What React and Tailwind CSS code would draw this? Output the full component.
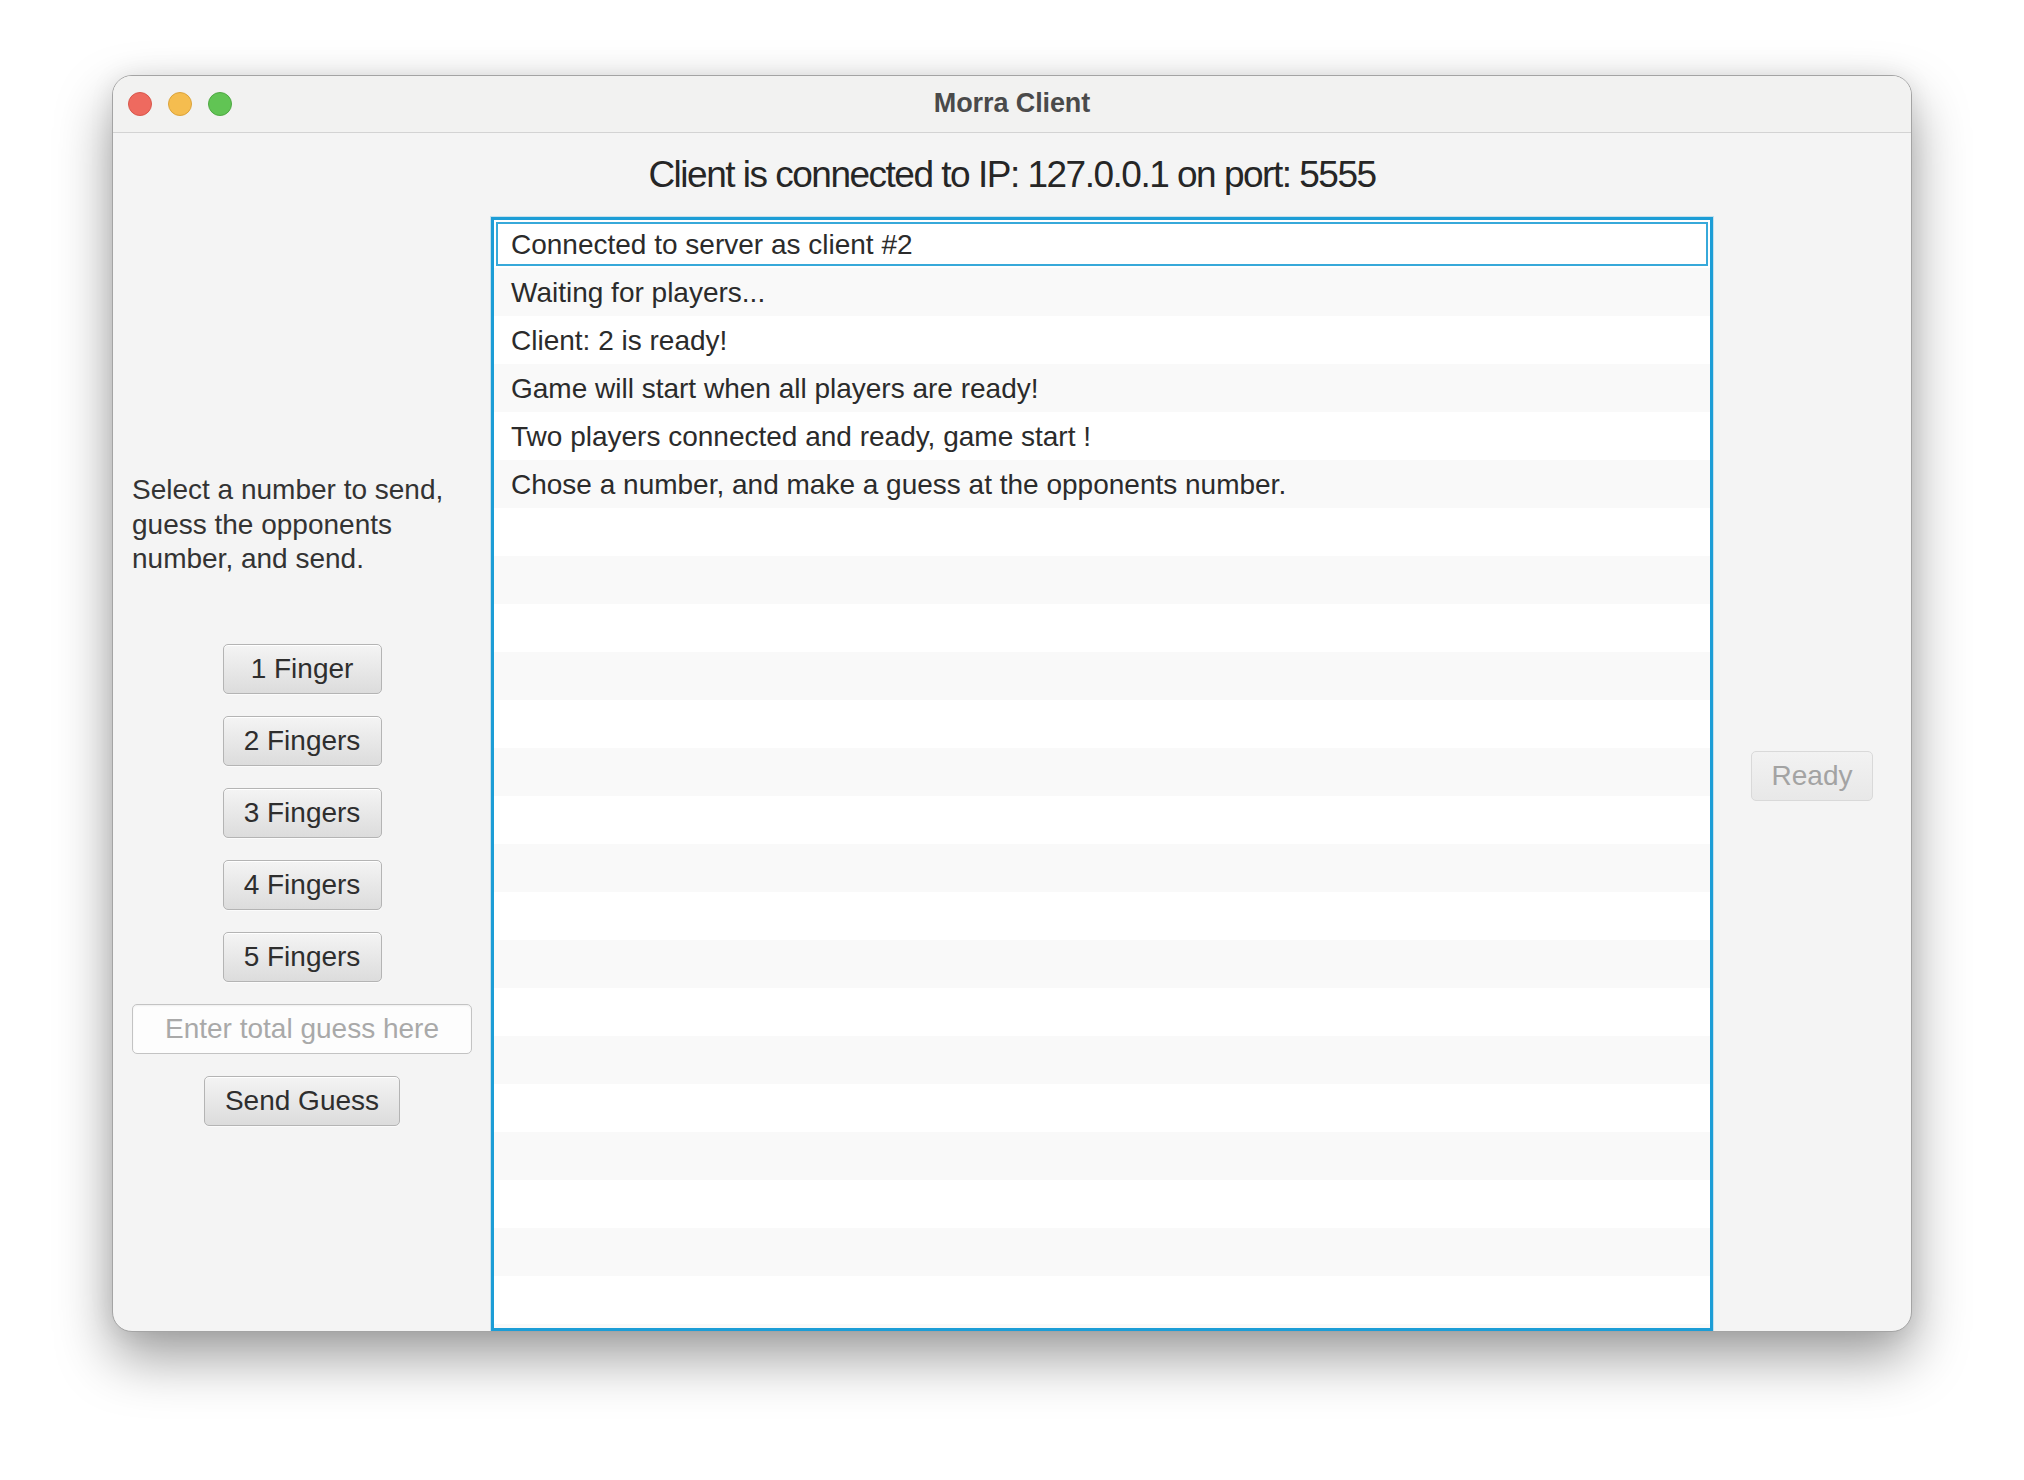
import React from 'react'

const messages = [
    'Connected to server as client #2',
    'Waiting for players...',
    'Client: 2 is ready!',
    'Game will start when all players are ready!',
    'Two players connected and ready, game start !',
    'Chose a number, and make a guess at the opponents number.',
]

const fingerOptions = ['1 Finger', '2 Fingers', '3 Fingers', '4 Fingers', '5 Fingers']

const FxButton = ({ children, className = '', disabled = false }) => (
    <button
        type="button"
        disabled={disabled}
        className={
            disabled
                ? `h-[50px] rounded-[5px] border-[1.5px] border-[#d9d9d9] bg-gradient-to-b from-[#f2f2f2] to-[#e8e8e8] text-[28px] text-[#a3a3a3] ${className}`
                : `h-[50px] rounded-[5px] border-[1.5px] border-[#b4b4b4] bg-gradient-to-b from-[#f4f4f4] to-[#dcdcdc] text-[28px] text-[#2e2e2e] shadow-[inset_0_1px_0_#ffffff,0_1px_0_#fbfbfb] ${className}`
        }
    >
        {children}
    </button>
)

const TrafficLights = () => (
    <div className="flex items-center gap-4 pl-[15px]">
        <span className="w-6 h-6 rounded-full bg-[#ee6a5f] border border-[#d8574c]" />
        <span className="w-6 h-6 rounded-full bg-[#f5bd4f] border border-[#dba33b]" />
        <span className="w-6 h-6 rounded-full bg-[#61c454] border border-[#4fa843]" />
    </div>
)

const MessageList = () => {
    const rows = Array.from({ length: 24 }, (_, i) => messages[i] || '')

    return (
        <div className="w-[1222px] h-full border-[3px] border-[#1c9dd6] bg-white overflow-hidden shadow-[0_0_0_1px_rgba(28,157,214,0.22)]">
            {rows.map((text, i) => (
                <div
                    key={i}
                    className={`h-[48px] shrink-0 ${i % 2 === 1 ? 'bg-[#f9f9f9]' : 'bg-white'}`}
                >
                    {i === 0 ? (
                        <div className="h-full p-[2px]">
                            <div className="h-full border-2 border-[#37a9da] flex items-center pl-[13px] pt-[2px] text-[28px] text-[#2b2b2b] whitespace-nowrap">
                                {text}
                            </div>
                        </div>
                    ) : (
                        <div className="h-full flex items-center pl-[17px] pt-[2px] text-[28px] text-[#2b2b2b] whitespace-nowrap">
                            {text}
                        </div>
                    )}
                </div>
            ))}
        </div>
    )
}

export default function App() {
    return (
        <div className="w-[2024px] h-[1480px] bg-white pl-[112px] pt-[75px] font-['Liberation_Sans',Arial,sans-serif]">
            <div className="w-[1800px] h-[1257px] flex flex-col rounded-[20px] border border-[#a4a4a4] bg-[#f4f4f4] overflow-hidden shadow-[0_26px_55px_rgba(0,0,0,0.38),0_0_24px_rgba(0,0,0,0.08)]">

                {/* title bar */}
                <div className="h-[57px] shrink-0 grid grid-cols-[1fr_auto_1fr] items-center bg-[#f2f2f1] border-b border-[#d3d3d3]">
                    <TrafficLights />
                    <div className="text-[27px] font-bold text-[#4a4a4a] tracking-[-0.1px] -mt-[2px]">Morra Client</div>
                    <div />
                </div>

                {/* connection header */}
                <div className="h-[84px] shrink-0 flex items-center justify-center">
                    <h1 className="text-[37px] text-[#262626] tracking-[-1.5px]">
                        Client is connected to IP: 127.0.0.1 on port: 5555
                    </h1>
                </div>

                <div className="flex flex-1 min-h-0">
                    {/* left controls */}
                    <div className="w-[378px] shrink-0 px-[19px] pt-[256px] flex flex-col items-center">
                        <p className="self-stretch text-[28px] leading-[34.5px] text-[#333333]">
                            Select a number to send, guess the opponents number, and send.
                        </p>
                        <div className="mt-[67px] flex flex-col items-center gap-[22px] self-stretch">
                            {fingerOptions.map((label) => (
                                <FxButton key={label} className="w-[159px]">{label}</FxButton>
                            ))}
                            <input
                                type="text"
                                placeholder="Enter total guess here"
                                className="w-full h-[50px] rounded-[5px] border-[1.5px] border-[#c3c3c3] bg-[#fdfdfd] text-center text-[28px] text-[#333] placeholder:text-[#a9a9a9] shadow-[inset_0_1px_2px_rgba(0,0,0,0.06)] outline-none"
                            />
                            <FxButton className="px-5">Send Guess</FxButton>
                        </div>
                    </div>

                    <MessageList />

                    {/* right side */}
                    <div className="flex-1 flex items-center justify-center pt-[3px]">
                        <FxButton disabled className="px-5">Ready</FxButton>
                    </div>
                </div>
            </div>
        </div>
    )
}
